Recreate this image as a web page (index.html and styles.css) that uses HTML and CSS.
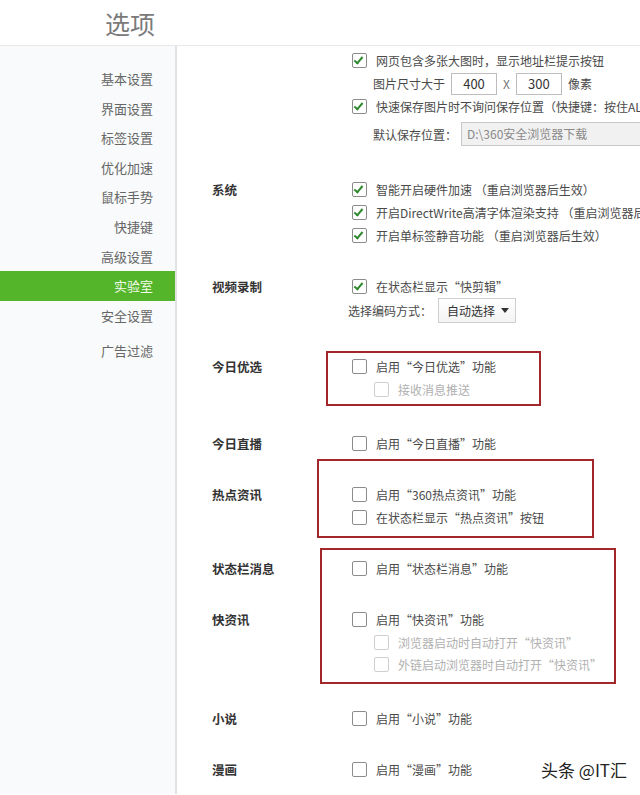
FILE: index.html
```html
<!DOCTYPE html>
<html lang="zh-CN">
<head>
    <meta charset="UTF-8">
    <meta name="viewport" content="width=device-width, initial-scale=1.0">
    <title>选项</title>
    <link rel="stylesheet" href="styles.css">
</head>
<body>
    <div class="page">
        <div class="header"><h1>选项</h1></div>

        <div class="main">
            <!-- Left menu -->
            <ul class="menu">
                <li>基本设置</li>
                <li>界面设置</li>
                <li>标签设置</li>
                <li>优化加速</li>
                <li>鼠标手势</li>
                <li>快捷键</li>
                <li>高级设置</li>
                <li class="active">实验室</li>
                <li>安全设置</li>
                <li class="gap">广告过滤</li>
            </ul>

            <div class="content">
                <div class="sec first">
                    <div class="lbl"></div>
                    <div class="opts">
                        <div class="opt"><span class="cb on"></span>网页包含多张大图时，显示地址栏提示按钮</div>
                        <div class="opt indent">图片尺寸大于<span class="num">400</span><span class="x">X</span><span class="num">300</span>像素</div>
                        <div class="opt"><span class="cb on"></span>快速保存图片时不询问保存位置（快捷键：按住ALT+鼠标左键点击图片）</div>
                        <div class="opt indent save">默认保存位置：<span class="path">D:\360安全浏览器下载</span></div>
                    </div>
                </div>

                <div class="sec far">
                    <div class="lbl">系统</div>
                    <div class="opts">
                        <div class="opt"><span class="cb on"></span>智能开启硬件加速 （重启浏览器后生效）</div>
                        <div class="opt"><span class="cb on"></span>开启DirectWrite高清字体渲染支持 （重启浏览器后生效）</div>
                        <div class="opt"><span class="cb on"></span>开启单标签静音功能 （重启浏览器后生效）</div>
                    </div>
                </div>

                <div class="sec">
                    <div class="lbl">视频录制</div>
                    <div class="opts">
                        <div class="opt"><span class="cb on"></span>在状态栏显示“快剪辑”</div>
                        <div class="opt pick">选择编码方式：<span class="select">自动选择 <i class="caret"></i></span></div>
                    </div>
                </div>

                <div class="sec far">
                    <div class="lbl">今日优选</div>
                    <div class="opts">
                        <div class="opt"><span class="cb"></span>启用“今日优选”功能</div>
                        <div class="opt sub off"><span class="cb"></span>接收消息推送</div>
                    </div>
                </div>

                <div class="sec far">
                    <div class="lbl">今日直播</div>
                    <div class="opts">
                        <div class="opt"><span class="cb"></span>启用“今日直播”功能</div>
                    </div>
                </div>

                <div class="sec">
                    <div class="lbl">热点资讯</div>
                    <div class="opts">
                        <div class="opt"><span class="cb"></span>启用“360热点资讯”功能</div>
                        <div class="opt"><span class="cb"></span>在状态栏显示“热点资讯”按钮</div>
                    </div>
                </div>

                <div class="sec">
                    <div class="lbl">状态栏消息</div>
                    <div class="opts">
                        <div class="opt"><span class="cb"></span>启用“状态栏消息”功能</div>
                    </div>
                </div>

                <div class="sec">
                    <div class="lbl">快资讯</div>
                    <div class="opts">
                        <div class="opt"><span class="cb"></span>启用“快资讯”功能</div>
                        <div class="opt sub off"><span class="cb"></span>浏览器启动时自动打开“快资讯”</div>
                        <div class="opt sub off"><span class="cb"></span>外链启动浏览器时自动打开“快资讯”</div>
                    </div>
                </div>

                <div class="sec far">
                    <div class="lbl">小说</div>
                    <div class="opts">
                        <div class="opt"><span class="cb"></span>启用“小说”功能</div>
                    </div>
                </div>

                <div class="sec">
                    <div class="lbl">漫画</div>
                    <div class="opts">
                        <div class="opt"><span class="cb"></span>启用“漫画”功能</div>
                    </div>
                </div>
            </div>
        </div>

        <!-- red annotation boxes drawn over the screenshot -->
        <div class="mark mark-1"></div>
        <div class="mark mark-2"></div>
        <div class="mark mark-3"></div>

        <div class="watermark">头条 @IT汇</div>
    </div>
</body>
</html>
```

FILE: styles.css
```css
html, body {
    margin: 0;
    padding: 0;
    background-color: #fff;
    overflow: hidden;
}

body {
    font-family: "Noto Sans CJK SC", "Liberation Sans", sans-serif;
    color: #4a4a4a;
}

.page {
    position: relative;
    width: 640px;
    height: 795px;
    overflow: hidden;
}

/* Title bar */
.header {
    height: 46px;
    border-bottom: 1px solid #e6e8ea;
    padding-left: 105px;
    box-sizing: border-box;
}

.header h1 {
    margin: 0;
    font-size: 25px;
    font-weight: normal;
    line-height: 46px;
    color: #7a7a7a;
}

.main {
    display: flex;
    height: 748px;
}

/* Left menu */
.menu {
    list-style: none;
    margin: 0;
    padding: 18px 0 0 0;
    width: 175px;
    flex-shrink: 0;
    background-color: #f8fafb;
    border-right: 2px solid #dfe3e6;
    box-sizing: content-box;
}

.menu li {
    height: 29.6px;
    line-height: 29.6px;
    text-align: right;
    padding-right: 22px;
    font-size: 13px;
    color: #666;
}

.menu li.active {
    background-color: #54b52b;
    color: #f2fbe9;
}

.menu li.gap {
    margin-top: 6px;
}

/* Right content */
.content {
    flex: 1;
    padding: 3px 0 0 35px;
    white-space: nowrap;
    overflow: hidden;
}

.sec {
    display: grid;
    grid-template-columns: 140px 1fr;
    margin-top: 28px;
}

.sec.first {
    margin-top: 0;
}

.sec.far {
    margin-top: 32px;
}

.lbl {
    font-size: 12.5px;
    font-weight: bold;
    line-height: 23px;
    color: #333;
}

.opt {
    display: flex;
    align-items: center;
    height: 23px;
    font-size: 12px;
}

.opt.sub {
    height: 22px;
    padding-left: 22px;
}

.opt.off {
    color: #b0b0b0;
}

.opt.indent {
    padding-left: 21px;
}

.opt.save {
    height: 24px;
    margin-top: 4px;
}

.opt.pick {
    height: 25px;
    margin-left: -4px;
}

/* Checkbox */
.cb {
    position: relative;
    width: 13px;
    height: 13px;
    border: 1px solid #8c8c8c;
    border-radius: 2px;
    background-color: #fff;
    margin-right: 9px;
    flex-shrink: 0;
}

.off .cb {
    border-color: #cfcfcf;
}

.cb.on::after {
    content: "";
    position: absolute;
    left: 3px;
    top: 1px;
    width: 3px;
    height: 7px;
    border-right: 2px solid #2f8a2f;
    border-bottom: 2px solid #2f8a2f;
    transform: rotate(40deg);
}

/* Inputs */
.num {
    display: inline-block;
    width: 44px;
    height: 20px;
    line-height: 20px;
    border: 1px solid #bdbdbd;
    text-align: center;
    font-size: 13px;
    color: #333;
    margin-left: 6px;
}

.x {
    margin: 0 6px 0 6px;
    color: #777;
}

.num + .x + .num {
    margin-left: 0;
    margin-right: 6px;
}

.path {
    display: inline-block;
    width: 220px;
    height: 22px;
    line-height: 22px;
    padding-left: 5px;
    margin-left: 4px;
    border: 1px solid #c8c8c8;
    background-color: #f1f1f1;
    color: #8a8a8a;
}

.select {
    display: inline-flex;
    align-items: center;
    height: 23px;
    padding: 0 6px 0 8px;
    margin-left: 6px;
    border: 1px solid #cfcfcf;
    background: linear-gradient(#fff, #f4f4f4);
    color: #333;
}

.caret {
    width: 0;
    height: 0;
    margin-left: 6px;
    border-left: 4px solid transparent;
    border-right: 4px solid transparent;
    border-top: 5px solid #333;
}

/* Annotation boxes */
.mark {
    position: absolute;
    border: 2px solid #a3262b;
}

.mark-1 {
    left: 326px;
    top: 351px;
    width: 211px;
    height: 51px;
}

.mark-2 {
    left: 317px;
    top: 459px;
    width: 273px;
    height: 75px;
}

.mark-3 {
    left: 320px;
    top: 548px;
    width: 292px;
    height: 132px;
}

.watermark {
    position: absolute;
    left: 541px;
    top: 757px;
    font-size: 17px;
    color: #222;
}
```
